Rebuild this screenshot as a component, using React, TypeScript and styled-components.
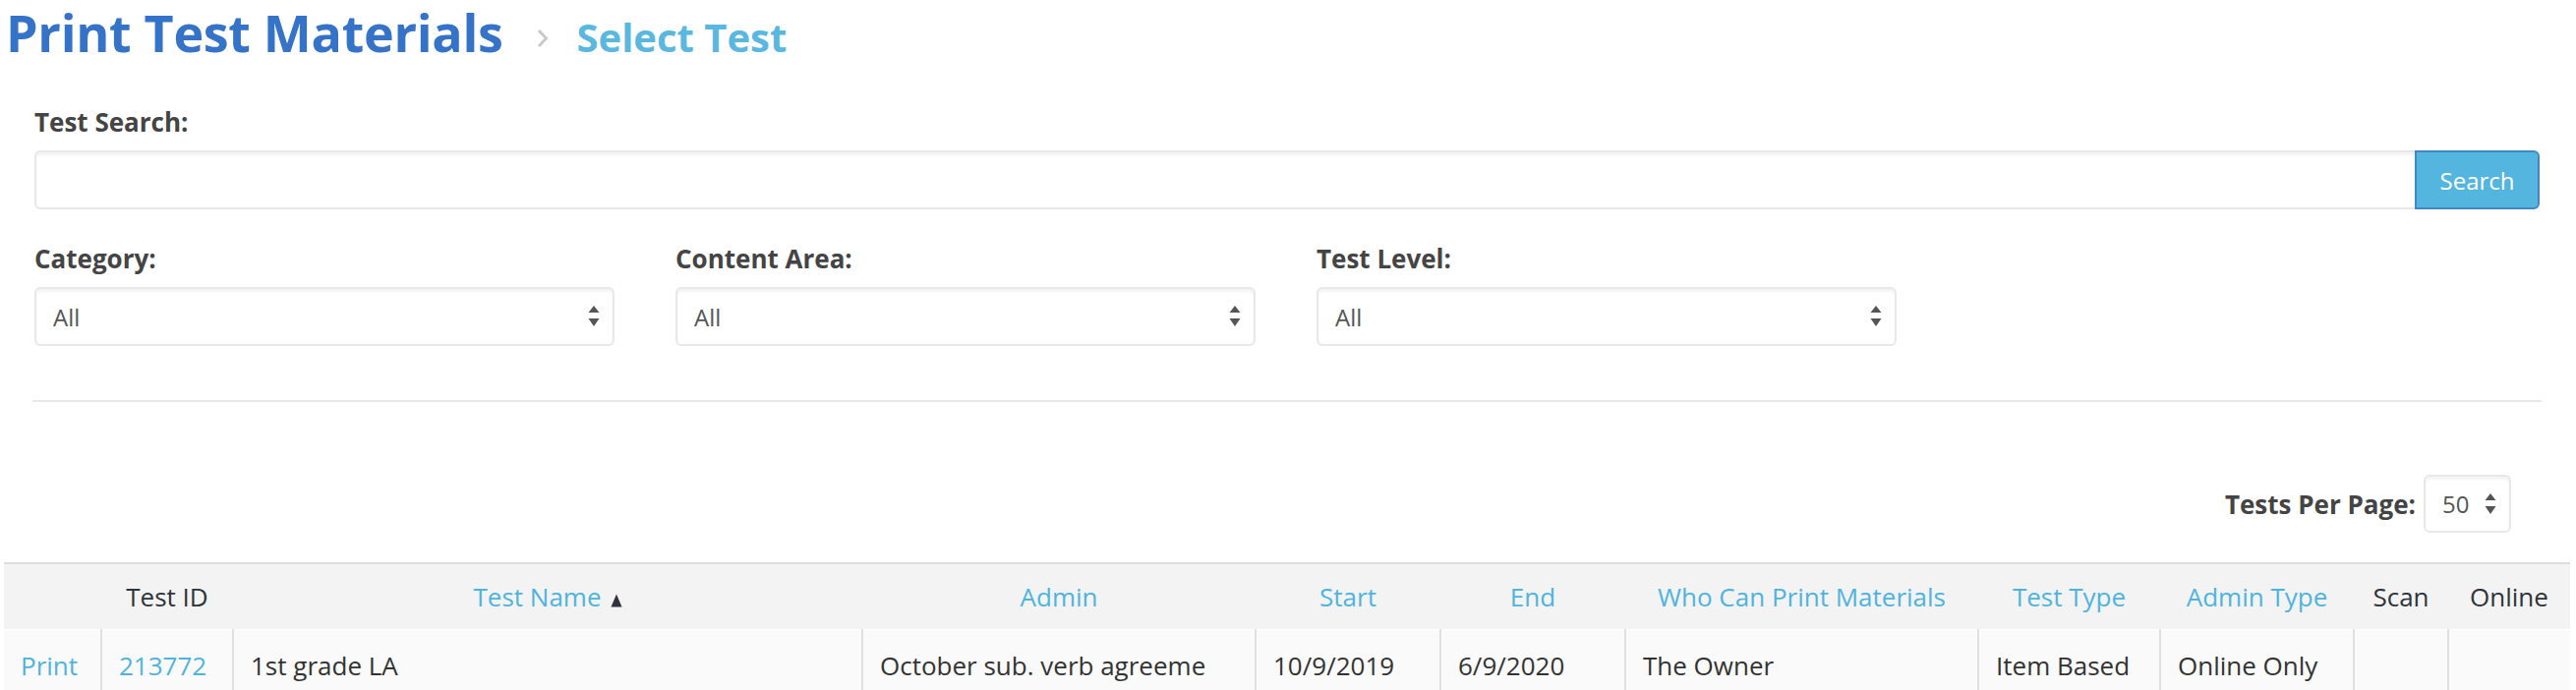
import React from 'react'
import styled, { createGlobalStyle } from 'styled-components'

type Column = {
  label: string
  width: number
  sortable?: boolean
  sorted?: boolean
}

type Cell = {
  text: string
  link?: boolean
}

const GlobalStyle = createGlobalStyle`
  html, body {
    margin: 0;
    padding: 0;
    background: #fff;
  }
  body {
    font-family: 'Open Sans', 'Liberation Sans', sans-serif;
    color: #333;
  }
  * {
    box-sizing: border-box;
  }
`

const Page = styled.div`
  width: 2620px;
  height: 702px;
  overflow: hidden;
`

const TitleRow = styled.div`
  display: flex;
  align-items: baseline;
  height: 62px;
  padding-top: 3px;
  padding-left: 6px;
`

const Title = styled.h1`
  margin: 0;
  font-size: 52px;
  line-height: 60px;
  font-weight: 700;
  letter-spacing: -0.3px;
  color: #3573c9;
  white-space: nowrap;
`

const Chevron = styled.svg`
  margin: 0 29px 0 34px;
`

const SubTitle = styled.h2`
  margin: 0;
  font-size: 40px;
  line-height: 60px;
  font-weight: 700;
  color: #5ab8e0;
  white-space: nowrap;
`

const Form = styled.div`
  padding: 0 37px 0 35px;
  margin-top: 45px;
`

const Label = styled.label`
  display: block;
  font-size: 26px;
  line-height: 34px;
  font-weight: 700;
  color: #444;
  margin-bottom: 12px;
`

const SearchGroup = styled.div`
  display: flex;
  height: 60px;
`

const SearchInput = styled.input`
  flex: 1;
  height: 60px;
  border: 2px solid #e8e8e8;
  border-right: none;
  border-radius: 6px 0 0 6px;
  box-shadow: inset 0 3px 3px rgba(0, 0, 0, 0.05);
  font-family: inherit;
  font-size: 24px;
  padding: 0 17px;
  outline: none;
`

const SearchButton = styled.button`
  width: 127px;
  height: 60px;
  background: #54b6de;
  border: 2px solid #4388c6;
  border-radius: 0 6px 6px 0;
  color: #fff;
  font-family: inherit;
  font-size: 24px;
  padding: 0;
`

const FilterGrid = styled.div`
  display: grid;
  grid-template-columns: repeat(3, 590px);
  column-gap: 62px;
  margin-top: 33px;
`

const SelectWrap = styled.div<{ $width?: number; $height?: number }>`
  display: grid;
  align-items: center;
  width: ${(p) => (p.$width ? `${p.$width}px` : '100%')};
  height: ${(p) => p.$height ?? 60}px;

  & > * {
    grid-area: 1 / 1;
  }
`

const Select = styled.select`
  appearance: none;
  width: 100%;
  height: 100%;
  border: 2px solid #e8e8e8;
  border-radius: 6px;
  box-shadow: inset 0 3px 3px rgba(0, 0, 0, 0.05);
  background: #fff;
  font-family: inherit;
  font-size: 24px;
  color: #555;
  padding: 0 17px;
  outline: none;
`

const Arrows = styled.svg`
  justify-self: end;
  margin-right: 15px;
  pointer-events: none;
`

const Rule = styled.hr`
  margin: 55px -2px 0;
  border: 0;
  border-top: 2px solid #e7e7e7;
`

const PagerRow = styled.div`
  display: flex;
  justify-content: flex-end;
  align-items: center;
  gap: 8px;
  margin-top: 74px;
  padding-right: 29px;
`

const PagerLabel = styled.span`
  font-size: 26px;
  line-height: 34px;
  font-weight: 700;
  color: #444;
`

const TableWrap = styled.div`
  margin-top: 30px;
  padding: 0 6px 0 4px;
`

const Table = styled.table`
  width: 100%;
  border-collapse: collapse;
  table-layout: fixed;
  border-top: 2px solid #ddd;
`

const HeadCell = styled.th<{ $link?: boolean }>`
  background: #f3f3f3;
  height: 67px;
  padding: 0 6px;
  font-size: 26px;
  line-height: 36px;
  font-weight: 400;
  text-align: center;
  white-space: nowrap;
  color: ${(p) => (p.$link ? '#4fb3df' : '#2f333b')};
`

const SortMark = styled.svg`
  margin-left: 9px;
  vertical-align: -1px;
`

const BodyCell = styled.td<{ $link?: boolean }>`
  background: #fafafa;
  padding: 18px 17px;
  font-size: 26px;
  line-height: 36px;
  white-space: nowrap;
  overflow: hidden;
  border-top: 1px solid #fff;
  color: ${(p) => (p.$link ? '#4fb3df' : '#333')};

  & + & {
    border-left: 2px solid #e0e0e0;
  }
`

const columns: Column[] = [
  { label: '', width: 99 },
  { label: 'Test ID', width: 134 },
  { label: 'Test Name', width: 640, sortable: true, sorted: true },
  { label: 'Admin', width: 400, sortable: true },
  { label: 'Start', width: 188, sortable: true },
  { label: 'End', width: 188, sortable: true },
  { label: 'Who Can Print Materials', width: 359, sortable: true },
  { label: 'Test Type', width: 185, sortable: true },
  { label: 'Admin Type', width: 197, sortable: true },
  { label: 'Scan', width: 96 },
  { label: 'Online', width: 124 },
]

const rows: Cell[][] = [
  [
    { text: 'Print', link: true },
    { text: '213772', link: true },
    { text: '1st grade LA' },
    { text: 'October sub. verb agreeme' },
    { text: '10/9/2019' },
    { text: '6/9/2020' },
    { text: 'The Owner' },
    { text: 'Item Based' },
    { text: 'Online Only' },
    { text: '' },
    { text: '' },
  ],
]

const SelectArrows = () => (
  <Arrows width="12" height="22" viewBox="0 0 12 22">
    <path d="M6 0 L11.5 7 L0.5 7 Z" fill="#555" />
    <path d="M0.5 13 L11.5 13 L6 21 Z" fill="#555" />
  </Arrows>
)

const FilterSelect = ({ label }: { label: string }) => (
  <div>
    <Label>{label}</Label>
    <SelectWrap>
      <Select defaultValue="all">
        <option value="all">All</option>
      </Select>
      <SelectArrows />
    </SelectWrap>
  </div>
)

export default function App() {
  return (
    <Page>
      <GlobalStyle />
      <TitleRow>
        <Title>Print Test Materials</Title>
        <Chevron width="12" height="24" viewBox="0 0 12 24">
          <path d="M2 2 L9.5 10 L2 18" fill="none" stroke="#c9c9c9" strokeWidth="3" />
        </Chevron>
        <SubTitle>Select Test</SubTitle>
      </TitleRow>

      <Form>
        <Label>Test Search:</Label>
        <SearchGroup>
          <SearchInput type="text" />
          <SearchButton>Search</SearchButton>
        </SearchGroup>

        <FilterGrid>
          <FilterSelect label="Category:" />
          <FilterSelect label="Content Area:" />
          <FilterSelect label="Test Level:" />
        </FilterGrid>

        <Rule />

        <PagerRow>
          <PagerLabel>Tests Per Page:</PagerLabel>
          <SelectWrap $width={89} $height={59}>
            <Select defaultValue="50">
              <option value="50">50</option>
            </Select>
            <SelectArrows />
          </SelectWrap>
        </PagerRow>
      </Form>

      <TableWrap>
        <Table>
          <colgroup>
            {columns.map((c, i) => (
              <col key={i} style={{ width: c.width }} />
            ))}
          </colgroup>
          <thead>
            <tr>
              {columns.map((c, i) => (
                <HeadCell key={i} $link={c.sortable}>
                  {c.label}
                  {c.sorted && (
                    <SortMark width="12" height="14" viewBox="0 0 12 14">
                      <path d="M6 0.5 L11.5 13.5 L0.5 13.5 Z" fill="#2f333b" />
                    </SortMark>
                  )}
                </HeadCell>
              ))}
            </tr>
          </thead>
          <tbody>
            {rows.map((row, r) => (
              <tr key={r}>
                {row.map((cell, i) => (
                  <BodyCell key={i} $link={cell.link}>
                    {cell.text}
                  </BodyCell>
                ))}
              </tr>
            ))}
          </tbody>
        </Table>
      </TableWrap>
    </Page>
  )
}
